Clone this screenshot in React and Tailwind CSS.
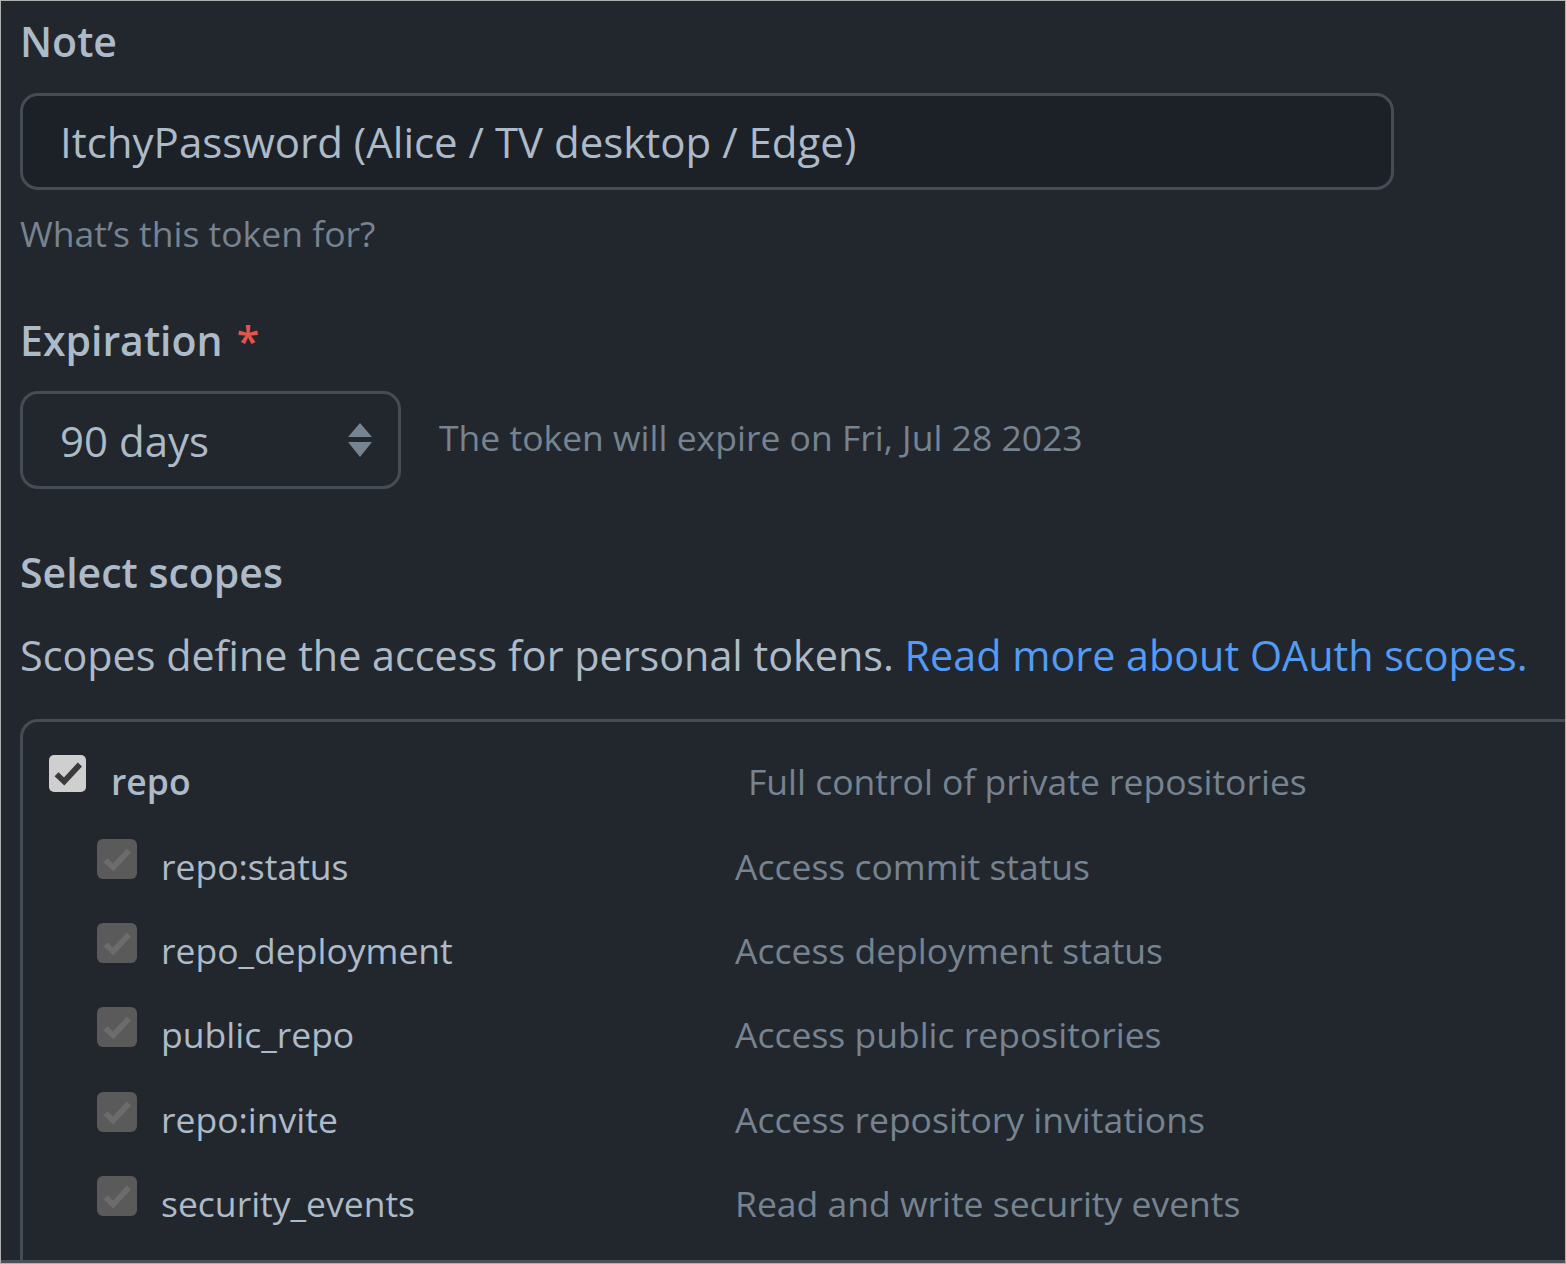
import React from 'react'

const font = { fontFamily: '"Open Sans", "Noto Sans", sans-serif' }

const scopes = [
  { name: 'repo:status', desc: 'Access commit status' },
  { name: 'repo_deployment', desc: 'Access deployment status' },
  { name: 'public_repo', desc: 'Access public repositories' },
  { name: 'repo:invite', desc: 'Access repository invitations' },
  { name: 'security_events', desc: 'Read and write security events' },
]

const Check = ({ disabled }) => (
  <div
    className={`shrink-0 flex items-center justify-center ${
      disabled
        ? 'w-[40px] h-[40px] rounded-[6px] bg-[#5a5a5a] mb-[15px]'
        : 'w-[37px] h-[37px] rounded-[5px] bg-[#cfcfcf] mb-[18px]'
    }`}
  >
    <svg viewBox="0 0 16 16" className="w-[34px] h-[34px]">
      <path
        d="M2.6 8.6 L6.2 12 L13.6 4"
        fill="none"
        stroke={disabled ? '#6c6c6c' : '#3a3a3a'}
        strokeWidth="2.7"
      />
    </svg>
  </div>
)

const SelectArrows = () => (
  <svg viewBox="0 0 24 36" className="w-[24px] h-[36px]">
    <path d="M12 1 L24 15 L0 15 Z" fill="#768390" />
    <path d="M0 20 L24 20 L12 35 Z" fill="#768390" />
  </svg>
)

export default function App() {
  return (
    <div
      style={font}
      className="w-[1566px] h-[1264px] bg-[#22272e] border border-[#b0b0b0] overflow-hidden flex flex-col pl-[19px] text-[#adbac7]"
    >
      {/* Note */}
      <div className="mt-[19px] text-[41px] leading-[42px] font-semibold">Note</div>
      <div className="mt-[31px] w-[1374px] h-[97px] shrink-0 rounded-[18px] border-[3px] border-[#444c56] bg-[#1c2128] flex items-center pl-[37px] text-[42px]">
        ItchyPassword (Alice / TV desktop / Edge)
      </div>
      <div className="mt-[25px] text-[35.5px] leading-[36px] text-[#768390]">What’s this token for?</div>

      {/* Expiration */}
      <div className="mt-[68px] text-[41px] leading-[42px] font-semibold flex">
        <span>Expiration</span>
        <span className="ml-[14px] text-[#e5534b]">*</span>
      </div>
      <div className="mt-[30px] flex items-center">
        <div className="w-[381px] h-[98px] rounded-[18px] border-[3px] border-[#444c56] bg-[#22272e] flex items-center justify-between pl-[37px] pr-[26px] text-[42px]">
          <span>90 days</span>
          <SelectArrows />
        </div>
        <span className="ml-[38px] -mt-[4px] text-[35.5px] text-[#768390]">The token will expire on Fri, Jul 28 2023</span>
      </div>

      {/* Scopes */}
      <div className="mt-[62px] text-[41px] leading-[42px] font-semibold">Select scopes</div>
      <p className="mt-[41px] text-[41.3px] leading-[42px] whitespace-nowrap">
        Scopes define the access for personal tokens.{' '}
        <a className="text-[#539bf5]">Read more about OAuth scopes.</a>
      </p>

      <div className="mt-[43px] flex-1 w-[1700px] rounded-tl-[18px] border-t-[3px] border-l-[3px] border-[#444c56] pt-[18px]">
        <div className="h-[84px] flex items-center pl-[26px]">
          <Check />
          <span className="ml-[25px] w-[637px] text-[35.5px] font-semibold">repo</span>
          <span className="text-[35.5px] text-[#768390]">Full control of private repositories</span>
        </div>
        {scopes.map((s) => (
          <div key={s.name} className="h-[84.4px] flex items-center pl-[74px]">
            <Check disabled />
            <span className="ml-[24px] w-[574px] text-[35.5px]">{s.name}</span>
            <span className="text-[35.5px] text-[#768390]">{s.desc}</span>
          </div>
        ))}
      </div>
      <div className="h-[3px] -ml-[19px] bg-[#4a5058] shrink-0" />
    </div>
  )
}
